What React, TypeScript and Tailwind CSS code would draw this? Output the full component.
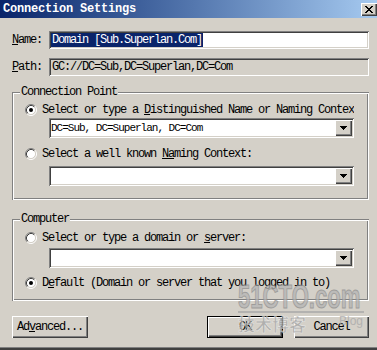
import React from "react";

const TXT = "font-['Liberation_Mono',monospace] text-[12px] tracking-[-1.2px] text-black";
const SUNKEN =
  "shadow-[inset_1px_1px_0_#808080,inset_-1px_-1px_0_#ffffff,inset_2px_2px_0_#404040,inset_-2px_-2px_0_#d4d0c8]";
const RAISED =
  "shadow-[inset_1px_1px_0_#ffffff,inset_-1px_-1px_0_#404040,inset_-2px_-2px_0_#808080]";
const ETCHED =
  "shadow-[inset_1px_1px_0_#808080,inset_-1px_-1px_0_#ffffff,inset_2px_2px_0_#ffffff,inset_-2px_-2px_0_#808080]";

function Radio({ checked }: { checked?: boolean }) {
  return (
    <svg width="12" height="12" viewBox="0 0 12 12" className="shrink-0">
      <circle cx="6" cy="6" r="4.5" fill="#ffffff" />
      <path d="M2.11 9.89 A5.5 5.5 0 0 1 9.89 2.11" stroke="#808080" fill="none" />
      <path d="M9.89 2.11 A5.5 5.5 0 0 1 2.11 9.89" stroke="#ffffff" fill="none" />
      <path d="M2.82 9.18 A4.5 4.5 0 0 1 9.18 2.82" stroke="#404040" fill="none" />
      <path d="M9.18 2.82 A4.5 4.5 0 0 1 2.82 9.18" stroke="#d4d0c8" fill="none" />
      {checked && <circle cx="6" cy="6" r="2" fill="#000000" />}
    </svg>
  );
}

function Arrow() {
  return (
    <svg width="7" height="4" viewBox="0 0 7 4" shapeRendering="crispEdges">
      <rect x="0" y="0" width="7" height="1" fill="#000" />
      <rect x="1" y="1" width="5" height="1" fill="#000" />
      <rect x="2" y="2" width="3" height="1" fill="#000" />
      <rect x="3" y="3" width="1" height="1" fill="#000" />
    </svg>
  );
}

function CloseX() {
  const rows = ["xx....xx", ".xx..xx.", "..xxxx..", "...xx...", "..xxxx..", ".xx..xx.", "xx....xx"];
  const rects: React.ReactElement[] = [];
  rows.forEach((r, y) =>
    r.split("").forEach((c, x) => {
      if (c === "x") rects.push(<rect key={`${x}-${y}`} x={x} y={y} width="1" height="1" fill="#000" />);
    })
  );
  return (
    <svg width="8" height="7" viewBox="0 0 8 7" shapeRendering="crispEdges">
      {rects}
    </svg>
  );
}

function Combo({ text }: { text?: string }) {
  return (
    <div className={`ml-[24px] w-[305px] h-[20px] bg-white p-[2px] flex ${SUNKEN}`}>
      <div className="flex-1 flex items-center font-['Liberation_Mono',monospace] text-[11px] tracking-[-1px] text-black whitespace-nowrap overflow-hidden">
        {text}
      </div>
      <div className={`w-[17px] h-full bg-[#d4d0c8] flex items-center justify-center ${RAISED}`}>
        <Arrow />
      </div>
    </div>
  );
}

function RadioRow({ checked, children, mt }: { checked?: boolean; children: React.ReactNode; mt: string }) {
  return (
    <div className={`${mt} h-[14px] flex items-center gap-[5px]`}>
      <Radio checked={checked} />
      <span className={`${TXT} whitespace-nowrap overflow-hidden w-[312px] leading-[14px]`}>{children}</span>
    </div>
  );
}

function Group({ label, h, mt, children }: { label: string; h: string; mt: string; children: React.ReactNode }) {
  return (
    <div className={`relative ${mt} ${h} pl-[13px] ${ETCHED}`}>
      <span className={`absolute left-[8px] top-[-7px] px-[1px] bg-[#d4d0c8] leading-[14px] ${TXT}`}>{label}</span>
      {children}
    </div>
  );
}

function Button({ w, children, def }: { w: string; children: React.ReactNode; def?: boolean }) {
  return (
    <div className={`${w} h-[22px] ${def ? "border border-black" : ""}`}>
      <div className={`w-full h-full bg-[#d4d0c8] flex items-center justify-center ${RAISED}`}>
        <span className={TXT}>{children}</span>
      </div>
    </div>
  );
}

const U = ({ children }: { children: React.ReactNode }) => (
  <span className="underline underline-offset-[1px]">{children}</span>
);

export default function App() {
  return (
    <div className="relative w-[377px] h-[350px] bg-[#d4d0c8] flex flex-col overflow-hidden">
      {/* Title bar */}
      <div className="h-[18px] flex items-start justify-between bg-linear-to-r from-[#0a246a] to-[#a6caf0]">
        <span className="pl-[3px] pt-[2px] leading-[14px] font-['Liberation_Mono',monospace] font-bold text-[12px] tracking-[-0.2px] text-white">
          Connection Settings
        </span>
        <div className={`mt-[3px] w-[16px] h-[13px] bg-[#d4d0c8] flex items-center justify-center ${RAISED}`}>
          <CloseX />
        </div>
      </div>

      <div className="pt-[13px] pl-[12px] pr-[8px] flex flex-col">
        {/* Name */}
        <div className="h-[18px] flex items-center">
          <span className={`w-[37px] ${TXT}`}>
            <U>N</U>ame:
          </span>
          <div className={`flex-1 h-full bg-white p-[2px] flex ${SUNKEN}`}>
            <span className={`h-full flex items-center bg-[#0a246a] px-[1px] ${TXT} text-white`}>
              Domain [Sub.Superlan.Com]
            </span>
          </div>
        </div>
        {/* Path */}
        <div className="mt-[9px] h-[18px] flex items-center">
          <span className={`w-[37px] ${TXT}`}>
            <U>P</U>ath:
          </span>
          <div className={`flex-1 h-full bg-[#d4d0c8] p-[2px] pl-[3px] flex items-center ${SUNKEN}`}>
            <span className={TXT}>GC://DC=Sub,DC=Superlan,DC=Com</span>
          </div>
        </div>

        <Group label="Connection Point" h="h-[108px]" mt="mt-[16px]">
          <RadioRow checked mt="mt-[11px]">
            Select or type a <U>D</U>istinguished Name or Naming Context
          </RadioRow>
          <div className="mt-[1px]">
            <Combo text="DC=Sub, DC=Superlan, DC=Com" />
          </div>
          <RadioRow mt="mt-[9px]">
            Select a well known <U>Na</U>ming Context:
          </RadioRow>
          <div className="mt-[5px]">
            <Combo />
          </div>
        </Group>

        <Group label="Computer" h="h-[82px]" mt="mt-[19px]">
          <RadioRow mt="mt-[12px]">
            Select or type a domain or <U>s</U>erver:
          </RadioRow>
          <div className="mt-[3px]">
            <Combo />
          </div>
          <RadioRow checked mt="mt-[8px]">
            D<U>e</U>fault (Domain or server that you logged in to)
          </RadioRow>
        </Group>

        <div className="mt-[15px] flex items-center justify-between">
          <Button w="w-[76px]">
            Ad<U>v</U>anced...
          </Button>
          <div className="flex gap-[11px]">
            <Button w="w-[76px]" def>
              OK
            </Button>
            <Button w="w-[75px]">Cancel</Button>
          </div>
        </div>
      </div>

      <div className="flex-1" />
      <div className="h-[1px] bg-[#808080]" />
      <div className="h-[2px] bg-[#404040]" />

      {/* Watermark */}
      <div className="pointer-events-none absolute left-[238px] top-[282px] w-[126px] opacity-75">
        <div className="h-[28px] overflow-visible">
          <div className="origin-left scale-x-[0.65] font-['Liberation_Sans',sans-serif] font-bold text-[34px] leading-[28px] text-[#b4b4b4] whitespace-nowrap [-webkit-text-stroke:1px_#8c8c8c]">
            51CTO.com
          </div>
        </div>
        <div className="mt-[1px] h-[2px] bg-[#a8a8a8]" />
        <div className="mt-[2px] flex items-start">
          <span className="font-['Noto_Sans_CJK_SC',sans-serif] font-bold text-[17px] leading-[18px] text-[#a4a4a4] [-webkit-text-stroke:0.5px_#eeeeee]">
            技术博客
          </span>
          <span className="ml-auto mr-[1px] font-['Liberation_Sans',sans-serif] text-[12px] leading-[12px] text-[#a8a8a8]">
            Blog
          </span>
        </div>
      </div>
    </div>
  );
}
